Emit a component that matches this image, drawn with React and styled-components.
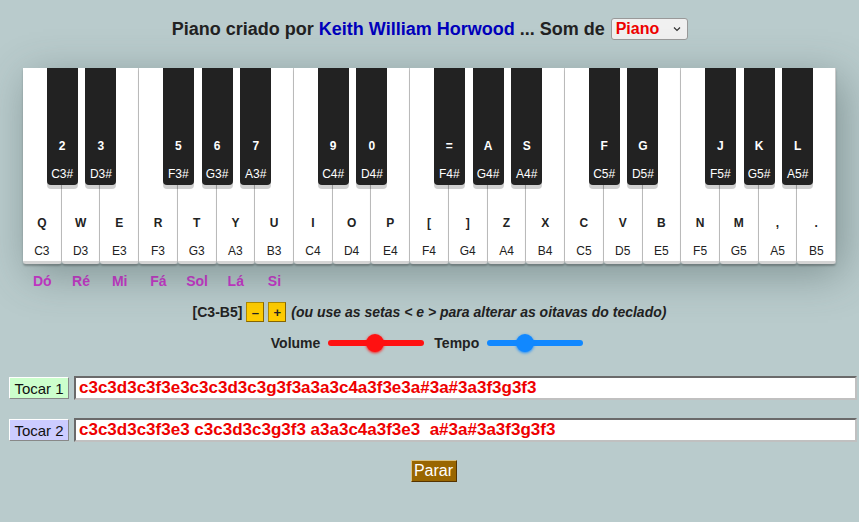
import React from "react"
import styled, { createGlobalStyle } from "styled-components"

const GlobalStyle = createGlobalStyle`
  html, body {
    margin: 0;
    padding: 0;
    background: #b9cbcc;
    font-family: "Liberation Sans", Arial, sans-serif;
    color: #222;
  }
  body {
    padding: 8px;
    height: 522px;
    box-sizing: border-box;
    overflow: hidden;
  }
`

const Title = styled.h1`
  margin: 9px 0 0;
  font-size: 18px;
  font-weight: bold;
  text-align: center;
  color: #222;
  display: flex;
  justify-content: center;
  align-items: center;
  gap: 5px;
  height: 24px;
  padding-left: 1px;
`

const Author = styled.span`
  color: #0000bb;
`

const SoundSelect = styled.div`
  display: inline-flex;
  align-items: center;
  gap: 14px;
  height: 20px;
  padding: 0 6px 0 4px;
  border: 1px solid #999;
  border-radius: 3px;
  background: #f0f0f0;
  color: #ee0000;
  font-size: 16px;
  margin-left: 1px;
`

const Caret = styled.svg`
  width: 8px;
  height: 6px;
`

const Keyboard = styled.div`
  position: relative;
  display: flex;
  width: 813px;
  margin: 27px auto 0;
  box-shadow: 6px 10px 40px rgba(60, 80, 80, 0.45);
`

const WhiteKey = styled.div`
  flex: 1;
  height: 196px;
  background: #fff;
  border-right: 1px solid #c8c8c8;
  border-bottom: 3px solid #d4d4d4;
  border-radius: 0 0 3px 3px;
  box-shadow: 0 2px 2px rgba(0, 0, 0, 0.25);
  display: flex;
  flex-direction: column;
  align-items: center;
  justify-content: flex-end;
  padding-bottom: 3px;
  box-sizing: border-box;
  font-size: 12px;
  color: #222;
  &:last-child {
    border-right: none;
  }
`

const KeyLetter = styled.span`
  font-weight: bold;
  margin-bottom: 14px;
`

const BlackKey = styled.div`
  position: absolute;
  top: 0;
  width: 31px;
  height: 117px;
  background: #222;
  border-radius: 0 0 4px 4px;
  box-shadow: 0 4px 0 rgba(0, 0, 0, 0.18);
  color: #fff;
  font-size: 12px;
  display: flex;
  flex-direction: column;
  align-items: center;
  justify-content: flex-end;
  padding-bottom: 4px;
  box-sizing: border-box;
  z-index: 2;
`

const BlackLetter = styled.span`
  font-weight: bold;
  margin-bottom: 14px;
`

const Solfege = styled.div`
  display: flex;
  width: 813px;
  margin: 9px auto 0;
`

const SolfegeName = styled.span`
  width: 38.7px;
  text-align: center;
  color: #cc33cc;
  font-weight: bold;
  font-size: 14px;
`

const OctaveRow = styled.div`
  display: flex;
  justify-content: center;
  align-items: center;
  gap: 4px;
  margin-top: 13px;
  font-size: 14px;
  font-weight: bold;
  color: #222;
`

const OctaveButton = styled.span`
  display: inline-flex;
  align-items: center;
  justify-content: center;
  width: 16px;
  height: 18px;
  background: #ffcc00;
  border: 1px solid #b08a00;
  border-right-color: #886600;
  border-bottom-color: #886600;
  font-size: 13px;
  color: #222;
`

const Hint = styled.i`
  margin-left: 1px;
`

const SliderRow = styled.div`
  display: flex;
  justify-content: center;
  align-items: center;
  gap: 8px;
  margin-top: 13px;
  font-size: 14px;
  font-weight: bold;
  padding-right: 3px;
`

const Track = styled.div`
  position: relative;
  width: 96px;
  height: 6px;
  border-radius: 3px;
  background: ${(p) => p.$color};
  margin-right: 2px;
`

const Thumb = styled.div`
  position: absolute;
  top: -6px;
  width: 18px;
  height: 18px;
  border-radius: 50%;
  background: ${(p) => p.$color};
  box-shadow: 0 1px 3px ${(p) => p.$color};
`

const PlayRow = styled.div`
  display: flex;
  align-items: center;
  gap: 5px;
  margin-top: ${(p) => p.$top}px;
  padding-left: 1px;
`

const PlayButton = styled.span`
  display: inline-flex;
  align-items: center;
  justify-content: center;
  width: 60px;
  height: 22px;
  box-sizing: border-box;
  background: ${(p) => p.$bg};
  border: 1px solid #fff;
  border-right-color: #888;
  border-bottom-color: #888;
  font-size: 15px;
  color: #111;
`

const Sequence = styled.div`
  flex: 1;
  height: 24px;
  box-sizing: border-box;
  border: 2px solid #6a6a6a;
  border-right-color: #c0c0c0;
  border-bottom-color: #c0c0c0;
  background: #fff;
  color: #ee0000;
  font-weight: bold;
  font-size: 17px;
  display: flex;
  align-items: center;
  padding-left: 3px;
  white-space: pre;
  margin-right: -6px;
`

const StopButton = styled.span`
  display: block;
  width: 46px;
  height: 22px;
  margin: 18px auto 0;
  box-sizing: border-box;
  background: #996600;
  border: 1px solid #d8c080;
  border-right-color: #553300;
  border-bottom-color: #553300;
  color: #fff;
  font-size: 16px;
  text-align: center;
  line-height: 20px;
  position: relative;
  left: 4px;
`

const whites = [
  ["Q", "C3"], ["W", "D3"], ["E", "E3"], ["R", "F3"], ["T", "G3"], ["Y", "A3"], ["U", "B3"],
  ["I", "C4"], ["O", "D4"], ["P", "E4"], ["[", "F4"], ["]", "G4"], ["Z", "A4"], ["X", "B4"],
  ["C", "C5"], ["V", "D5"], ["B", "E5"], ["N", "F5"], ["M", "G5"], [",", "A5"], [".", "B5"],
]

// [index of white key before it, key, note]
const blacks = [
  [0, "2", "C3#"], [1, "3", "D3#"], [3, "5", "F3#"], [4, "6", "G3#"], [5, "7", "A3#"],
  [7, "9", "C4#"], [8, "0", "D4#"], [10, "=", "F4#"], [11, "A", "G4#"], [12, "S", "A4#"],
  [14, "F", "C5#"], [15, "G", "D5#"], [17, "J", "F5#"], [18, "K", "G5#"], [19, "L", "A5#"],
]

const solfege = ["Dó", "Ré", "Mi", "Fá", "Sol", "Lá", "Si"]

const KEY_W = 813 / 21

export default function App() {
  return (
    <>
      <GlobalStyle />
      <Title>
        <span>Piano criado por</span>
        <Author>Keith William Horwood</Author>
        <span>... Som de</span>
        <SoundSelect>
          Piano
          <Caret viewBox="0 0 8 6">
            <path d="M1 1.5 L4 4.5 L7 1.5" fill="none" stroke="#333" strokeWidth="1.2" />
          </Caret>
        </SoundSelect>
      </Title>

      <Keyboard>
        {whites.map(([k, n]) => (
          <WhiteKey key={n}>
            <KeyLetter>{k}</KeyLetter>
            <span>{n}</span>
          </WhiteKey>
        ))}
        {blacks.map(([i, k, n]) => (
          <BlackKey key={n} style={{ left: (i + 1) * KEY_W - 15 }}>
            <BlackLetter>{k}</BlackLetter>
            <span>{n}</span>
          </BlackKey>
        ))}
      </Keyboard>

      <Solfege>
        {solfege.map((s) => (
          <SolfegeName key={s}>{s}</SolfegeName>
        ))}
      </Solfege>

      <OctaveRow>
        <span>[C3-B5]</span>
        <OctaveButton>–</OctaveButton>
        <OctaveButton>+</OctaveButton>
        <Hint>(ou use as setas &lt; e &gt; para alterar as oitavas do teclado)</Hint>
      </OctaveRow>

      <SliderRow>
        <span>Volume</span>
        <Track $color="#ff1111">
          <Thumb $color="#ff1111" style={{ left: 38 }} />
        </Track>
        <span>Tempo</span>
        <Track $color="#1188ff">
          <Thumb $color="#1188ff" style={{ left: 29 }} />
        </Track>
      </SliderRow>

      <PlayRow $top={25}>
        <PlayButton $bg="#ccffcc">Tocar 1</PlayButton>
        <Sequence>c3c3d3c3f3e3c3c3d3c3g3f3a3a3c4a3f3e3a#3a#3a3f3g3f3</Sequence>
      </PlayRow>
      <PlayRow $top={18}>
        <PlayButton $bg="#ccccff">Tocar 2</PlayButton>
        <Sequence>c3c3d3c3f3e3 c3c3d3c3g3f3 a3a3c4a3f3e3  a#3a#3a3f3g3f3</Sequence>
      </PlayRow>

      <StopButton>Parar</StopButton>
    </>
  )
}
